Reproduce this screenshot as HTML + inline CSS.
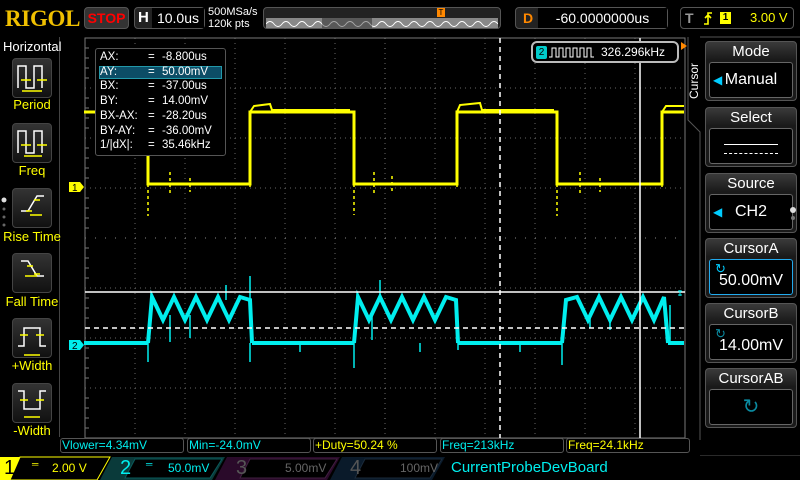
<!DOCTYPE html>
<html><head><meta charset="utf-8"><style>
*{margin:0;padding:0;box-sizing:border-box}
body{width:800px;height:480px;background:#000;overflow:hidden;position:relative;font-family:"Liberation Sans",sans-serif;color:#fff}
.a{position:absolute}
.box{position:absolute;border:1px solid #555;border-radius:4px;background:#111}
.lbtn{position:absolute;left:12px;width:40px;height:40px;border:1px solid #444;border-radius:4px;background:linear-gradient(#333,#111)}
.llab{position:absolute;left:0;width:64px;text-align:center;color:#ff0;font-size:13px}
.rb{position:absolute;left:705px;width:92px;height:60px;border:1px solid #555;border-radius:4px;background:linear-gradient(#3a3a3a,#1a1a1a 30%)}
.rb .t{text-align:center;font-size:15px;color:#fff;height:20px;line-height:20px}
.rb .i{position:absolute;left:3px;right:3px;top:20px;height:36px;border:1px solid #666;border-radius:3px;background:#000;font-size:16px;text-align:center;line-height:34px}
.mb{position:absolute;top:438px;height:15px;border:1px solid #555;border-radius:3px;font-size:12px;line-height:13px;padding-left:1px}
</style></head><body>
<!-- top bar -->
<div class="a" style="left:5px;top:6px;font-family:'Liberation Serif',serif;font-weight:bold;font-size:23px;color:#f0c000;letter-spacing:-0.3px">RIGOL</div>
<div class="box" style="left:84px;top:7px;width:45px;height:22px;background:#333;color:#f00;font-weight:bold;font-size:14px;text-align:center;line-height:20px">STOP</div>
<div class="box" style="left:134px;top:7px;width:71px;height:22px;background:#222"><span class="a" style="left:3px;top:1px;font-weight:bold;font-size:15px">H</span><div class="a" style="left:17px;top:0;width:52px;height:20px;background:#000;font-size:14px;text-align:center;line-height:20px">10.0us</div></div>
<div class="a" style="left:208px;top:6px;font-size:11px;line-height:12px">500MSa/s<br>120k pts</div>
<div class="box" style="left:263px;top:7px;width:238px;height:22px;background:#222"></div>
<div class="a" style="left:266px;top:18px;width:232px;height:10px;background:#888"></div>
<svg class="a" style="left:266px;top:18px" width="232" height="10"><path d="M0,6 q4,-5 8,0 t8,0 t8,0 t8,0 t8,0 t8,0 t8,0 t8,0 t8,0 t8,0 t8,0 t8,0 t8,0 t8,0 t8,0 t8,0 t8,0 t8,0 t8,0 t8,0 t8,0 t8,0 t8,0 t8,0 t8,0 t8,0 t8,0 t8,0 t8,0" fill="none" stroke="#fff" stroke-width="1"/><rect x="56" y="0" width="50" height="10" fill="#000" opacity="0.35"/></svg>
<div class="a" style="left:437px;top:8px;width:8px;height:9px;background:#f80;font-size:8px;color:#000;text-align:center;line-height:9px">T</div>
<div class="box" style="left:515px;top:7px;width:153px;height:22px;background:#222"><span class="a" style="left:7px;top:2px;font-weight:bold;font-size:14px;color:#f80">D</span><div class="a" style="left:22px;top:0;width:129px;height:20px;background:#000;font-size:14px;text-align:center;line-height:20px">-60.0000000us</div></div>
<div class="box" style="left:680px;top:7px;width:114px;height:22px;background:#000"><span class="a" style="left:4px;top:2px;font-weight:bold;font-size:14px;color:#999">T</span><svg class="a" style="left:21px;top:3px" width="12" height="15"><path d="M2,13H6V2H10M3,7L6,4L9,7" stroke="#ff0" stroke-width="1.6" fill="none"/></svg><span class="a" style="left:39px;top:4px;width:11px;height:12px;background:#ff0;color:#000;font-size:10px;text-align:center;line-height:12px;font-weight:bold">1</span><span class="a" style="left:69px;top:2px;color:#ff0;font-size:13px">3.00 V</span></div>
<!-- left panel -->
<div class="a" style="left:0;top:37px;width:60px;height:400px;border-right:1px solid #444"></div>
<div class="a" style="left:3px;top:39px;font-size:13px">Horizontal</div>
<div class="lbtn" style="top:58px"></div><div class="llab" style="top:97px">Period</div>
<div class="lbtn" style="top:123px"></div><div class="llab" style="top:163px">Freq</div>
<div class="lbtn" style="top:188px"></div><div class="llab" style="top:229px">Rise Time</div>
<div class="lbtn" style="top:253px"></div><div class="llab" style="top:294px">Fall Time</div>
<div class="lbtn" style="top:318px"></div><div class="llab" style="top:358px">+Width</div>
<div class="lbtn" style="top:383px"></div><div class="llab" style="top:423px">-Width</div>
<svg class="a" style="left:0;top:0" width="64" height="440" fill="none" stroke-width="1.5">
<g stroke="#fff"><path d="M18,88 V66 H26 V88 H34 V66 H42 V88"/><path d="M18,153 V131 H26 V153 H34 V131 H42 V153"/><path d="M21,211 H28 L37,196 H44"/><path d="M21,261 H28 L37,276 H44"/><path d="M18,346 H24 V328 H40 V346 H46"/><path d="M18,391 H24 V409 H40 V391 H46"/></g>
<g stroke="#ff0"><path d="M21,80h10M37,80h10M22,91h20"/><path d="M21,145h10M37,145h10M24,156h18"/><path d="M26,211h6M34,200h6M30,215h12"/><path d="M27,266h6M34,274h6M25,276h12"/><path d="M20,335h8M36,335h8M24,355h16"/><path d="M20,400h8M36,400h8M24,417h16"/></g>
<g fill="#ddd" stroke="none"><circle cx="4" cy="200" r="2.5"/><circle cx="4" cy="209" r="1.5" fill="#666"/><circle cx="4" cy="217" r="1.5" fill="#666"/><circle cx="4" cy="225" r="1.5" fill="#666"/></g>
</svg>
<!-- grid & waves -->
<svg class="a" style="left:0;top:0" width="800" height="480">
<g stroke="#666" stroke-width="1" stroke-dasharray="1,4">
<path d="M135,38V438M185,38V438M235,38V438M285,38V438M335,38V438M385,38V438M435,38V438M485,38V438M535,38V438M585,38V438M635,38V438"/>
<path d="M85,88H685M85,138H685M85,188H685M85,288H685M85,338H685M85,388H685"/>
</g>
<path d="M85,238H685M385,38V438" stroke="#888" stroke-dasharray="1,9" stroke-width="1"/>
<rect x="85" y="38" width="600" height="400" fill="none" stroke="#777"/>
<path d="M85,48h4M85,58h4M85,68h4M85,78h4M85,98h4M85,108h4M85,118h4M85,128h4M85,148h4M85,158h4M85,168h4M85,178h4M85,198h4M85,208h4M85,218h4M85,228h4M85,248h4M85,258h4M85,268h4M85,278h4M85,298h4M85,308h4M85,318h4M85,328h4M85,348h4M85,358h4M85,368h4M85,378h4M85,398h4M85,408h4M85,418h4M85,428h4" stroke="#777"/>
<!-- yellow -->
<g stroke="#ff0" fill="none">
<path d="M84,112H148V184H250V112H354V184H457V112H557V184H662V112H684" stroke-width="3"/>
<path d="M250,112 L254,106 L270,104 L272,110 H350 M457,112 L460,105 L480,103 L482,110 H554 M662,112 L666,106 L684,106" stroke-width="2"/>
<path d="M148,160V216M170,172V196M190,178V192M354,160V215M374,172V196M392,176V192M557,160V216M580,172V196M600,178V192M250,112V190M457,112V190M662,112V190" stroke-width="1.5" stroke-dasharray="3,3"/>
</g>
<!-- cyan -->
<g stroke="#0ee" fill="none">
<path d="M84,343H148M252,343H354M458,343H562M668,343H684" stroke-width="4"/>
<path d="M148,343L152,297L163,320L174,297L185,320L196,297L207,320L218,297L229,320L240,297L250,300L252,343" stroke-width="4"/>
<path d="M354,343L358,297L369,320L380,297L391,320L402,297L413,320L424,297L435,320L446,297L456,300L458,343" stroke-width="4"/>
<path d="M562,343L566,300L577,297L588,320L599,297L610,320L621,297L632,320L643,297L654,320L664,297L668,343" stroke-width="4"/>
<path d="M148,343V362M354,343V368M562,343V365M250,343V362M458,343V350M170,315V342M190,315V338M250,276V300M226,285V300M380,280V300M372,312V340M590,318V328M610,318V330M670,305V345M420,343V352M300,343V352M520,343V352" stroke-width="1.5"/>
</g>
<!-- cursors -->
<path d="M85,292H685" stroke="#fff" stroke-width="1.5"/>
<path d="M85,328H685" stroke="#fff" stroke-width="1.5" stroke-dasharray="5,4"/>
<path d="M640,38V438" stroke="#fff" stroke-width="1.5"/>
<path d="M500,38V438" stroke="#fff" stroke-width="1.5" stroke-dasharray="5,4"/>
<!-- channel markers -->
<path d="M69,182h11l4,5l-4,5h-11z" fill="#ff0"/>
<path d="M69,340h11l4,5l-4,5h-11z" fill="#0ee"/>
<text x="72" y="191" font-size="10" font-family="Liberation Sans" fill="#000">1</text>
<text x="72" y="349" font-size="10" font-family="Liberation Sans" fill="#000">2</text>
<path d="M681,42l6,4l-6,4z" fill="#f80"/>
<path d="M680,290v6M678,291h4M678,295h4" stroke="#0ee"/>
<!-- right panel outline -->
<path d="M688,37V120L700,132V440M700,37H800" stroke="#555" fill="none"/>
</svg>
<!-- cursor readout -->
<div class="a" style="left:95px;top:48px;width:131px;height:108px;border:1px solid #555;border-radius:3px;background:#000;font-size:11.5px;line-height:14.7px;padding:1px 0 0 4px">
<div class="a" style="left:3px;top:17px;width:123px;height:13px;background:#0c4d66;border:1px solid #29a"></div>
<div style="position:relative">AX:<span class="a" style="left:48px">=</span><span class="a" style="left:62px">-8.800us</span></div>
<div style="position:relative">AY:<span class="a" style="left:48px">=</span><span class="a" style="left:62px">50.00mV</span></div>
<div style="position:relative">BX:<span class="a" style="left:48px">=</span><span class="a" style="left:62px">-37.00us</span></div>
<div style="position:relative">BY:<span class="a" style="left:48px">=</span><span class="a" style="left:62px">14.00mV</span></div>
<div style="position:relative">BX-AX:<span class="a" style="left:48px">=</span><span class="a" style="left:62px">-28.20us</span></div>
<div style="position:relative">BY-AY:<span class="a" style="left:48px">=</span><span class="a" style="left:62px">-36.00mV</span></div>
<div style="position:relative">1/|dX|:<span class="a" style="left:48px">=</span><span class="a" style="left:62px">35.46kHz</span></div>
</div>
<!-- freq box -->
<div class="a" style="left:531px;top:41px;width:148px;height:22px;border:2px solid #bbb;border-radius:6px;background:#000;font-size:12px;line-height:18px">
<span class="a" style="left:3px;top:3px;width:11px;height:13px;background:#0cc;border-radius:2px;color:#000;font-size:10px;text-align:center;line-height:13px">2</span>
<svg class="a" style="left:16px;top:3px" width="46" height="13"><path d="M0,11H3V2H7V11H10V2H14V11H17V2H21V11H24V2H28V11H31V2H35V11H38V2H42V11H45" stroke="#fff" fill="none"/></svg>
<span class="a" style="left:68px;top:0">326.296kHz</span></div>
<!-- right menu -->
<div class="a" style="left:687px;transform:rotate(-90deg);transform-origin:left top;font-size:12px;top:99px">Cursor</div>
<div class="rb" style="top:41px"><div class="t">Mode</div><div class="i"><span style="color:#0cf;font-size:12px;position:absolute;left:3px">&#9664;</span>Manual</div></div>
<div class="rb" style="top:107px"><div class="t">Select</div><div class="i"><div class="a" style="left:14px;right:14px;top:15px;border-top:1px solid #fff"></div><div class="a" style="left:14px;right:14px;top:24px;border-top:1px dashed #fff"></div></div></div>
<div class="rb" style="top:173px"><div class="t">Source</div><div class="i"><span style="color:#0cf;font-size:12px;position:absolute;left:3px">&#9664;</span>CH2</div></div>
<div class="rb" style="top:238px"><div class="t">CursorA</div><div class="i" style="border-color:#2ae;line-height:42px">50.00mV<span class="a" style="left:5px;top:-12px;color:#0cf;font-size:13px">&#8635;</span></div></div>
<div class="rb" style="top:303px"><div class="t">CursorB</div><div class="i" style="line-height:42px">14.00mV<span class="a" style="left:5px;top:-12px;color:#0a8aa0;font-size:13px">&#8635;</span></div></div>
<div class="rb" style="top:368px"><div class="t">CursorAB</div><div class="i" style="color:#0a8aa0;font-size:20px">&#8635;</div></div>
<svg class="a" style="left:788px;top:205px" width="10" height="20"><circle cx="5" cy="5" r="3" fill="#ddd"/><circle cx="5" cy="13" r="2" fill="#777"/></svg>
<!-- measurements -->
<div class="mb" style="left:60px;width:124px;color:#0ee">Vlower=4.34mV</div>
<div class="mb" style="left:187px;width:124px;color:#0ee">Min=-24.0mV</div>
<div class="mb" style="left:313px;width:124px;color:#ff0">+Duty=50.24 %</div>
<div class="mb" style="left:440px;width:124px;color:#0ee">Freq=213kHz</div>
<div class="mb" style="left:566px;width:124px;color:#ff0">Freq=24.1kHz</div>
<!-- bottom channels -->
<svg class="a" style="left:0;top:455px" width="800" height="25">
<path d="M0,2H110L97,25H0z" fill="#ff0"/>
<path d="M20,2H110L97,25H10z" fill="#000" stroke="#ff0"/>
<path d="M112,2H225L212,25H100z" fill="#0a3a3a"/><path d="M135,4H222L210,23H125z" fill="#000" stroke="#0a5a5a"/>
<path d="M227,2H340L327,25H215z" fill="#2a0a2a"/><path d="M250,4H337L325,23H240z" fill="#000" stroke="#402040"/>
<path d="M342,2H445L432,25H330z" fill="#0a1a2a"/><path d="M365,4H442L430,23H355z" fill="#000" stroke="#1a2a3a"/>
<path d="M700,0H800" stroke="#555"/>
</svg>
<div class="a" style="left:4px;top:457px;font-size:20px;color:#000">1</div>
<div class="a" style="left:32px;top:459px;font-size:9px;color:#ff0">&#9552;</div>
<div class="a" style="left:52px;top:461px;font-size:12px;color:#ff0">2.00 V</div>
<div class="a" style="left:120px;top:457px;font-size:20px;color:#0ee">2</div>
<div class="a" style="left:146px;top:459px;font-size:9px;color:#0ee">&#9552;</div>
<div class="a" style="left:168px;top:461px;font-size:12px;color:#0ee">50.0mV</div>
<div class="a" style="left:236px;top:457px;font-size:20px;color:#555">3</div>
<div class="a" style="left:285px;top:461px;font-size:12px;color:#666">5.00mV</div>
<div class="a" style="left:350px;top:457px;font-size:20px;color:#555">4</div>
<div class="a" style="left:400px;top:461px;font-size:12px;color:#666">100mV</div>
<div class="a" style="left:451px;top:459px;font-size:15px;color:#0ee">CurrentProbeDevBoard</div>
</body></html>
